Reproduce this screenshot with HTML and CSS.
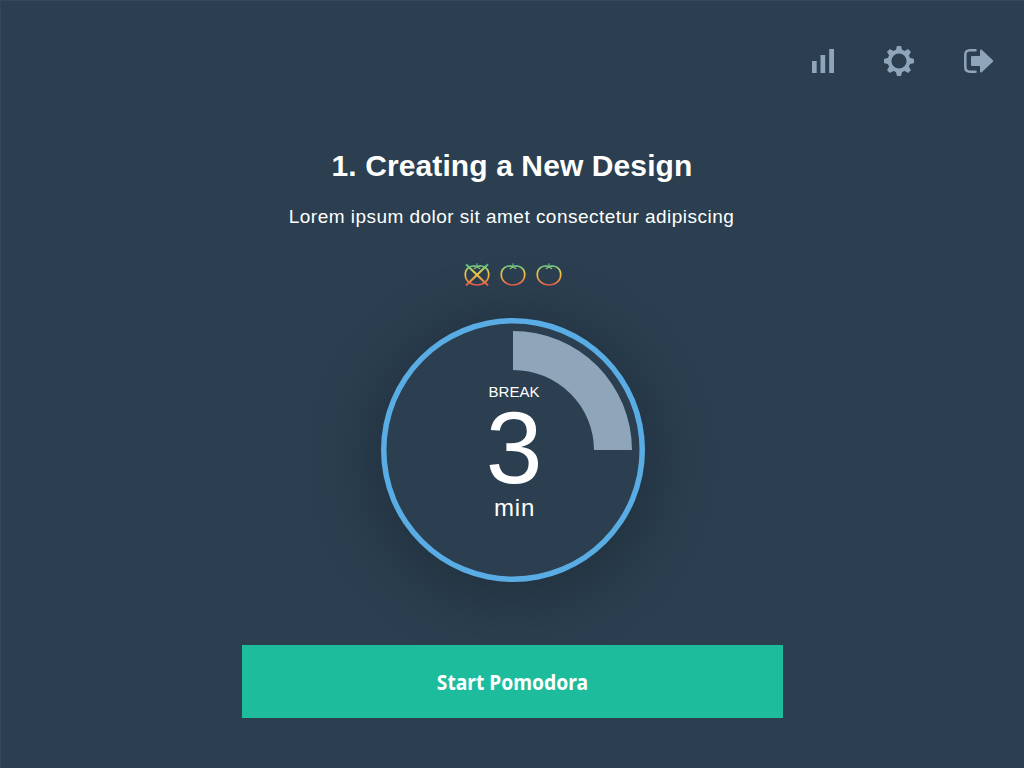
FILE: index.html
```html
<!DOCTYPE html>
<html lang="en">
<head>
<meta charset="utf-8">
<title>Pomodora</title>
<link rel="stylesheet" href="styles.css">
</head>
<body>
<main class="screen">
  <nav class="toolbar">
    <svg class="icon icon-stats" viewBox="0 0 22 24"><path d="M0 12h4.700v12H0zM8.500 6h4.700v18H8.500zM17.200 0H22v24h-4.800z"/></svg>
    <svg class="icon icon-gear" viewBox="-15 -15 30 30">
      <circle class="gear-ring" r="9.500"/>
      <path id="tooth" d="M-3.200-10.500L-2.200-14.400Q-2-15-1.400-15H1.400Q2-15 2.200-14.400L3.200-10.500z"/>
      <use href="#tooth" transform="rotate(45)"/><use href="#tooth" transform="rotate(90)"/><use href="#tooth" transform="rotate(135)"/><use href="#tooth" transform="rotate(180)"/><use href="#tooth" transform="rotate(225)"/><use href="#tooth" transform="rotate(270)"/><use href="#tooth" transform="rotate(315)"/>
    </svg>
    <svg class="icon icon-exit" viewBox="0 0 30 24"><path class="exit-door" d="M11.500 1.300H6Q1.300 1.300 1.300 6v12q0 4.700 4.700 4.700h5.500"/><path class="exit-arrow" d="M8 8h9V1.500L28.200 12 17 22.500V16H8z"/></svg>
  </nav>
  <h1 class="title">1. Creating a New Design</h1>
  <p class="subtitle">Lorem ipsum dolor sit amet consectetur adipiscing</p>
  <div class="tomatoes">
    <svg class="tomato" viewBox="0 0 28 26">
      <defs><linearGradient id="ripe" gradientUnits="userSpaceOnUse" x1="0" y1="2" x2="0" y2="25"><stop offset="0" stop-color="#2fae91"/><stop offset=".2" stop-color="#8fc477"/><stop offset=".38" stop-color="#dfcc4d"/><stop offset=".55" stop-color="#f8bd3e"/><stop offset=".8" stop-color="#ee8548"/><stop offset="1" stop-color="#df5149"/></linearGradient></defs>
      <g id="fruit"><path d="M14 5.500C19.500 3.900 25.700 6.600 25.700 13.600 25.700 20 20.500 24 14 24S2.300 20 2.300 13.600C2.300 6.600 8.500 3.900 14 5.500z"/><path class="calyx" d="M14 2.200v4M9.500 4.900q3 .2 4.500 1 1.500-.8 4.500-1M10.800 7.700L14 5.900l3.200 1.800"/></g>
      <path class="cross" d="M3 3.200L25 24.500M25 3.200L3 24.500"/>
    </svg>
    <svg class="tomato" viewBox="0 0 28 26"><use href="#fruit"/></svg>
    <svg class="tomato" viewBox="0 0 28 26"><use href="#fruit"/></svg>
  </div>
  <section class="timer">
    <svg class="progress" viewBox="0 0 264 264"><path d="M132 13A119 119 0 0 1 251 132H213A81 80 0 0 0 132 52z"/></svg>
    <div class="readout">
      <span class="phase">BREAK</span>
      <span class="minutes">3</span>
      <span class="unit">min</span>
    </div>
  </section>
  <button class="start"><span class="start-label">Start Pomodora</span></button>
</main>
</body>
</html>
```
FILE: styles.css
```css
* { box-sizing: border-box; }
body { margin: 0; background: #2b3f50; color: #fff; font-family: "Liberation Sans", Arial, sans-serif; }
.screen { width: 1024px; height: 768px; display: flex; flex-direction: column; align-items: center; overflow: hidden; border-top: 1px solid #34495b; border-left: 1px solid #32475a; background: #2b3f50; }
.toolbar { align-self: stretch; height: 120px; display: flex; justify-content: flex-end; align-items: center; padding-right: 30px; }
.icon { display: block; fill: #8ea5ba; }
.icon-stats { width: 22px; height: 24px; margin-right: 50px; }
.icon-gear { width: 30px; height: 30px; margin-right: 50px; }
.icon-exit { width: 30px; height: 24px; }
.gear-ring { fill: none; stroke: #8ea5ba; stroke-width: 3.800; }
.exit-door { fill: none; stroke: #8ea5ba; stroke-width: 2.500; stroke-linecap: round; }
.exit-arrow { stroke: #8ea5ba; stroke-width: 2; stroke-linejoin: round; }
.title { margin: 27px 1px 0 0; height: 36px; line-height: 36px; font-size: 30px; font-weight: 700; letter-spacing: .1px; white-space: nowrap; }
.subtitle { margin: 21px 2px 0 0; height: 24px; line-height: 24px; font-size: 19px; letter-spacing: .47px; white-space: nowrap; }
.tomatoes { display: flex; gap: 8px; margin: 32px 0 0; }
.tomato { display: block; width: 28px; height: 26px; fill: none; stroke: url(#ripe); stroke-width: 1.700; }
.calyx { stroke-width: 1.300; }
.cross { stroke-width: 2.100; }
.timer { display: grid; width: 264px; height: 264px; margin: 31px 0 0 1px; border-radius: 50%; background: #2b3f50; box-shadow: 0 10px 70px rgba(0, 0, 0, .3), inset 0 0 0 5.500px #5aace4; }
.progress, .readout { grid-area: 1 / 1; }
.progress { width: 264px; height: 264px; fill: #8ea5ba; }
.readout { display: flex; flex-direction: column; align-items: center; padding-top: 65px; }
.phase { height: 18px; line-height: 18px; font-size: 15px; padding-left: 2px; }
.minutes { height: 92px; line-height: 94px; font-size: 102px; padding-left: 2px; }
.unit { height: 30px; line-height: 30px; font-size: 24px; letter-spacing: .8px; padding-left: 3px; }
.start { width: 541px; height: 73px; margin: 63px 0 0; padding: 0; border: 0; background: #1dbc9c; color: #fff; font: 700 22px "Noto Sans", sans-serif; }
.start-label { display: inline-block; transform: translateY(-1px) scaleX(.875); }
```
